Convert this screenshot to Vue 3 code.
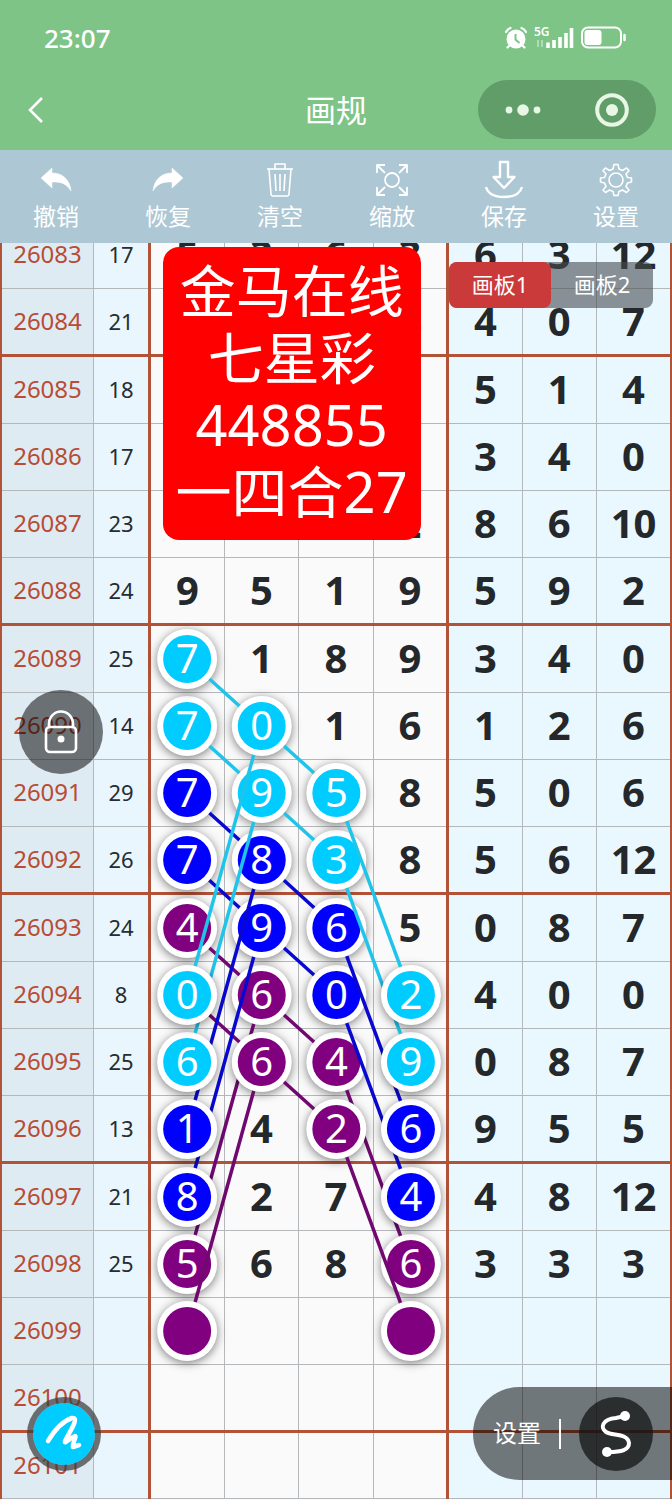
<template>
  <div class="pagina">
    <header class="cabecera">
      <div class="barra-estado">
        <span class="hora">23:07</span>
        <div class="estado-iconos">
          <svg width="24" height="24" viewBox="0 0 24 24" aria-hidden="true">
            <circle cx="12" cy="13" r="9.500" fill="#fff" />
            <path d="M2 6 Q3.500 3 6.500 2 M22 6 Q20.500 3 17.500 2 M5 20 L3.500 21.500 M19 20 L20.500 21.500" fill="none" stroke="#fff" stroke-width="2.200" stroke-linecap="round" />
            <path d="M11.500 8 V13.500 L15.500 17" fill="none" stroke="#7dc486" stroke-width="2" />
          </svg>
          <svg class="senal" width="40" height="24" viewBox="0 0 40 24" aria-hidden="true">
            <text x="0" y="10" class="red-movil">5G</text>
            <path d="M4 14 V21 M8 14 V21" stroke="#b9e5bd" stroke-width="1.500" />
            <path d="M14 16.500 V22 M20 14 V22 M26 11 V22 M32 7 V22 M37.500 2 V22" stroke="#fff" stroke-width="3.600" />
          </svg>
          <svg width="48" height="24" viewBox="0 0 48 24" aria-hidden="true">
            <rect x="2" y="1.500" width="39" height="20" rx="6" fill="none" stroke="#fff" stroke-width="2" />
            <rect x="4.500" y="4" width="17" height="15" rx="3" fill="#fff" />
            <path d="M44.500 9 V14" stroke="#fff" stroke-width="2.500" stroke-linecap="round" />
          </svg>
        </div>
      </div>
      <div class="barra-nav">
        <button type="button" class="btn-volver" aria-label="返回">
          <svg width="20" height="30" viewBox="0 0 20 30"><path d="M16 3 L4 15 L16 27" fill="none" stroke="#fff" stroke-width="2.600" /></svg>
        </button>
        <h1>画规</h1>
        <div class="capsula">
          <button type="button" aria-label="更多">
            <svg width="40" height="20" viewBox="0 0 40 20" fill="#e8f6e6">
              <circle cx="6" cy="10" r="3.400" /><circle cx="20" cy="10" r="5.800" /><circle cx="34" cy="10" r="3.400" />
            </svg>
          </button>
          <button type="button" aria-label="关闭">
            <svg width="36" height="36" viewBox="0 0 36 36">
              <circle cx="18" cy="18" r="14.800" fill="none" stroke="#e8f6e6" stroke-width="4" /><circle cx="18" cy="18" r="6" fill="#e8f6e6" />
            </svg>
          </button>
        </div>
      </div>
    </header>

    <nav class="herramientas">
      <button v-for="h in herramientas" :key="h.nombre" type="button">
        <svg width="40" height="40" viewBox="0 0 40 40" fill="none" stroke="#fff" :stroke-width="h.grosor">
          <path v-for="(d, i) in h.trazos" :key="i" :d="d" :fill="h.relleno ? '#fff' : 'none'" stroke-linejoin="round" />
        </svg>
        <span>{{ h.nombre }}</span>
      </button>
    </nav>

    <main ref="tablero" class="tablero">
      <div class="lienzo">
        <table>
          <colgroup>
            <col class="col-periodo">
            <col class="col-suma">
            <col v-for="n in 7" :key="n">
          </colgroup>
          <tbody>
            <tr v-for="(fila, i) in filas" :key="fila[0]" :class="{ gruesa: i % 4 === 1, alta: esAlta(i) }">
              <th scope="row">{{ fila[0] }}</th>
              <td class="suma">{{ fila[1] }}</td>
              <td v-for="n in 4" :key="n" class="cifra">{{ fila[2][n - 1] }}</td>
              <td v-for="n in 3" :key="'d' + n" class="cifra derecha">{{ fila[3][n - 1] }}</td>
            </tr>
          </tbody>
        </table>

        <svg class="trazado" width="100%" height="100%">
          <g v-for="(c, i) in cadenas" :key="i">
            <template v-for="(p, j) in c.puntos" :key="j">
              <g v-if="!p.oculto">
                <circle class="aro" :cx="px(p)" :cy="py(p)" r="30" />
                <circle :cx="px(p)" :cy="py(p)" r="24" :fill="c.color" />
                <text :x="px(p)" :y="py(p) + 14" class="numero">{{ p.n }}</text>
              </g>
            </template>
            <line v-for="(l, j) in lineas(c.puntos)" :key="'l' + j" v-bind="l" :stroke="c.linea" stroke-width="3.500" />
          </g>
        </svg>
      </div>

      <div class="aviso">
        <div>金马在线</div>
        <div>七星彩</div>
        <div>448855</div>
        <div>一四合27</div>
      </div>

      <div class="pestanas">
        <button type="button" :class="{ activa: panel === 1 }" @click="panel = 1">画板1</button>
        <button type="button" :class="{ activa: panel === 2 }" @click="panel = 2">画板2</button>
      </div>

      <button type="button" class="btn-bloqueo" aria-label="锁定">
        <svg width="36" height="46" viewBox="0 0 36 46" fill="none" stroke="#fff" stroke-width="2.600">
          <rect x="3" y="18" width="30" height="25" rx="4" />
          <path d="M6 18 V15 A12 12.500 0 0 1 30 15 V18" />
          <circle cx="18" cy="30" r="3.500" fill="#fff" stroke="none" />
        </svg>
      </button>
    </main>

    <button type="button" class="btn-pincel" aria-label="画笔">
      <svg width="40" height="40" viewBox="0 0 40 40">
        <path d="M4 27 C10 17 19 7 28 4 C36 3 26 17 21 27 C20 31 26 24 31 22 C33 22 28 30 29 33 L35 31" fill="none" stroke="#fff" stroke-width="4.500" stroke-linecap="round" stroke-linejoin="round" />
      </svg>
    </button>

    <div class="ajustes">
      <button type="button" class="btn-ajustes">设置</button>
      <span class="separador"></span>
      <button type="button" class="btn-curva" aria-label="曲线">
        <svg width="36" height="48" viewBox="0 0 36 48">
          <path d="M27 6 L18 8 C4 9 2 18 8 22 C14 26 30 23 31 33 C31 40 24 42 10 42" fill="none" stroke="#fff" stroke-width="4" />
          <circle cx="27" cy="6" r="5" fill="#fff" /><circle cx="9" cy="42" r="5" fill="#fff" />
        </svg>
      </button>
    </div>
  </div>
</template>

<script setup>
import { ref, onMounted, onBeforeUnmount } from 'vue';

const panel = ref(1);
const tablero = ref(null);
const ancho = ref(672);

const herramientas = [
  {
    nombre: '撤销', relleno: true, grosor: 0.5,
    trazos: ['M5 18 L16 8 V13 C27 13 34 20 35 31 C30 23 25 22 16 22 V28 Z']
  },
  {
    nombre: '恢复', relleno: true, grosor: 0.5,
    trazos: ['M35 18 L24 8 V13 C13 13 6 20 5 31 C10 23 15 22 24 22 V28 Z']
  },
  {
    nombre: '清空', grosor: 1.6,
    trazos: ['M7 9 H33', 'M15 9 V4 H25 V9', 'M9 9 L11 34 Q11.200 36 13 36 H27 Q28.800 36 29 34 L31 9', 'M15 14 L16 31 M20 14 V31 M25 14 L24 31']
  },
  {
    nombre: '缩放', grosor: 1.8,
    trazos: ['M13 20 A7 7 0 1 0 27 20 A7 7 0 1 0 13 20', 'M5 13 V5 H13 M5 5 L13 13', 'M27 5 H35 V13 M35 5 L27 13', 'M5 27 V35 H13 M5 35 L13 27', 'M27 35 H35 V27 M35 35 L27 27']
  },
  {
    nombre: '保存', grosor: 2.4,
    trazos: ['M16 2 H24 V17 H30.500 L20 28 L9.500 17 H16 Z', 'M2 27 C4 34 11 37 20 37 C29 37 36 34 38 27']
  },
  {
    nombre: '设置', grosor: 1.6,
    trazos: [
      'M13 20 A7 7 0 1 0 27 20 A7 7 0 1 0 13 20',
      'M18 4.500 H22 L23 9 L26.500 10.500 L30.500 8 L33 10.500 L30 14 L31.500 17.500 L35.500 18 V22 L31.500 23 L30 26.500 L33 30 L30.500 32.500 L26.500 30 L23 31.500 L22 35.500 H18 L17 31.500 L13.500 30 L9.500 32.500 L7 30 L10 26.500 L8.500 23 L4.500 22 V18 L8.500 17.500 L10 14 L7 10.500 L9.500 8 L13.500 10.500 L17 9 Z'
    ]
  }
];

const filas = [
  ['26083', 17, [5, 3, 6, 3], [6, 3, 12]],
  ['26084', 21, ['', '', '', 4], [4, 0, 7]],
  ['26085', 18, ['', '', '', 0], [5, 1, 4]],
  ['26086', 17, ['', '', '', 0], [3, 4, 0]],
  ['26087', 23, ['', '', '', 2], [8, 6, 10]],
  ['26088', 24, [9, 5, 1, 9], [5, 9, 2]],
  ['26089', 25, ['', 1, 8, 9], [3, 4, 0]],
  ['26090', 14, ['', '', 1, 6], [1, 2, 6]],
  ['26091', 29, ['', '', '', 8], [5, 0, 6]],
  ['26092', 26, ['', '', '', 8], [5, 6, 12]],
  ['26093', 24, ['', '', '', 5], [0, 8, 7]],
  ['26094', 8, [], [4, 0, 0]],
  ['26095', 25, [], [0, 8, 7]],
  ['26096', 13, ['', 4], [9, 5, 5]],
  ['26097', 21, ['', 2, 7], [4, 8, 12]],
  ['26098', 25, ['', 6, 8], [3, 3, 3]],
  ['26099', '', [], []],
  ['26100', '', [], []],
  ['26101', '', [], []]
];

// inicio, centro izquierdo, centro derecho, final izquierdo, final derecho
const crearCadena = (color, linea, fila, numeros, filaFinal, oculto = false) => ({
  color,
  linea,
  puntos: [
    { f: fila, c: 0, n: numeros[0], oculto },
    { f: fila + 1, c: 1, n: numeros[1] },
    { f: fila + 2, c: 2, n: numeros[2] },
    { f: filaFinal, c: 0, n: numeros[3] },
    { f: filaFinal, c: 3, n: numeros[4] }
  ]
});

// las últimas se dibujan encima de las primeras
const cadenas = [
  crearCadena('#800080', '#700870', 10, [4, 6, 4, 5, 6], 15),
  crearCadena('#800080', '#700870', 11, ['', 6, 2, '', ''], 16, true),
  crearCadena('#0000ff', '#0808d0', 9, [7, 9, 0, 8, 4], 14),
  crearCadena('#0000ff', '#0808d0', 8, [7, 8, 6, 1, 6], 13),
  crearCadena('#00ccff', '#20c4ea', 7, [7, 9, 3, 6, 9], 12),
  crearCadena('#00ccff', '#20c4ea', 6, [7, 0, 5, 0, 2], 11)
];

const esAlta = (i) => i > 0 && i < 18 && i % 4 === 2;

const px = (p) => ancho.value * (0.223 + 0.777 / 7 * (p.c + 0.5));
const py = (p) => {
  let y = 0;
  for (let i = 0; i < p.f; i++) y += esAlta(i) ? 68 : 67;
  return y + (esAlta(p.f) ? 35 : 34);
};

const tramo = (a, b) => {
  const dx = px(b) - px(a);
  const dy = py(b) - py(a);
  const k = 30 / Math.hypot(dx, dy);
  return { x1: px(a) + dx * k, y1: py(a) + dy * k, x2: px(b) - dx * k, y2: py(b) - dy * k };
};
const lineas = (p) => [tramo(p[0], p[1]), tramo(p[1], p[2]), tramo(p[1], p[3]), tramo(p[2], p[4])];

const medir = () => {
  ancho.value = tablero.value.clientWidth;
};
onMounted(() => {
  medir();
  window.addEventListener('resize', medir);
});
onBeforeUnmount(() => window.removeEventListener('resize', medir));
</script>

<style>
body {
  margin: 0;
  background: #fafafa;
}
</style>

<style scoped>
.pagina {
  position: relative;
  min-height: 100vh;
  overflow: hidden;
  font-family: "Noto Sans", "Noto Sans CJK SC", sans-serif;
}

button {
  display: flex;
  align-items: center;
  justify-content: center;
  padding: 0;
  border: none;
  background: none;
  color: #fff;
  font-family: inherit;
  cursor: pointer;
}

.cabecera {
  background: #7dc486;
  color: #fff;
}
.barra-estado {
  display: flex;
  align-items: center;
  justify-content: space-between;
  height: 80px;
  padding: 0 44px 4px;
  box-sizing: border-box;
}
.hora {
  font-size: 26px;
  font-weight: 500;
}
.estado-iconos {
  display: flex;
  align-items: center;
  gap: 6px;
}
.senal {
  overflow: visible;
}
.red-movil {
  font-size: 12px;
  font-weight: 600;
  fill: #fff;
}
.barra-nav {
  display: grid;
  grid-template-columns: 1fr auto 1fr;
  align-items: start;
  height: 70px;
  padding: 0 16px;
}
.barra-nav h1 {
  margin: 0;
  font-size: 31px;
  line-height: 60px;
  font-weight: 400;
}
.btn-volver {
  width: 40px;
  height: 60px;
}
.capsula {
  display: flex;
  justify-self: end;
  width: 178px;
  height: 59px;
  border-radius: 30px;
  background: #609d68;
}
.capsula button {
  flex: 1;
}

.herramientas {
  display: grid;
  grid-template-columns: repeat(6, 1fr);
  height: 93px;
  background: #adc8d4;
}
.herramientas button {
  flex-direction: column;
  justify-content: flex-start;
  padding-top: 10px;
  font-size: 23px;
  line-height: 32px;
}

.tablero {
  position: relative;
  overflow: hidden;
}
.lienzo {
  position: relative;
  margin-top: -22px;
}
table {
  width: 100%;
  table-layout: fixed;
  border-collapse: collapse;
  border-left: 2px solid #b25236;
  border-right: 2px solid #b25236;
}
.col-periodo {
  width: 13.8%;
}
.col-suma {
  width: 8.4%;
}
tr {
  height: 67px;
}
tr.alta {
  height: 68px;
}
th,
td {
  padding: 0 0 2px;
  border: 1px solid #b4b8ba;
  text-align: center;
  line-height: 48px;
}
th:first-child {
  border-left: 2px solid #b25236;
}
td:last-child {
  border-right: 2px solid #b25236;
}
th {
  background: #dfebf2;
  color: #b84c34;
  font-size: 24px;
  font-weight: 400;
}
td.suma {
  background: #e9f6fe;
  border-right: 3px solid #b25236;
  color: #262c30;
  font-size: 22px;
}
td.cifra {
  background: #fafafa;
  color: #24282a;
  font-size: 40px;
  font-weight: 700;
}
td.derecha {
  background: #e9f8ff;
}
td.cifra:nth-child(6) {
  border-right: 3px solid #b25236;
}
tr.gruesa th,
tr.gruesa td {
  border-bottom: 3px solid #b25236;
}

.trazado {
  position: absolute;
  top: 0;
  left: 0;
}
.aro {
  fill: #fff;
  filter: drop-shadow(0 2px 5px rgba(0, 0, 0, 0.5));
}
.numero {
  fill: #fff;
  font-size: 40px;
  text-anchor: middle;
}

.aviso {
  position: absolute;
  top: 4px;
  left: 24.2%;
  padding: 10px 13px 15px;
  border-radius: 16px;
  background: #ff0000;
  color: #fff;
  font-size: 56px;
  line-height: 67px;
  text-align: center;
}

.pestanas {
  position: absolute;
  top: 19px;
  right: 19px;
  display: flex;
  border-radius: 8px;
  background: rgba(70, 75, 80, 0.6);
}
.pestanas button {
  width: 102px;
  height: 46px;
  padding-bottom: 4px;
  border-radius: 8px;
  font-size: 22px;
}
.pestanas .activa {
  background: #cb3a3a;
}

.btn-bloqueo {
  position: absolute;
  top: 447px;
  left: 19px;
  width: 84px;
  height: 84px;
  border-radius: 50%;
  background: rgba(0, 0, 0, 0.52);
}

.btn-pincel {
  position: absolute;
  bottom: 29px;
  left: 27px;
  width: 74px;
  height: 74px;
  border: 6px solid rgba(60, 60, 60, 0.72);
  border-radius: 50%;
  background: #00ccff;
  background-clip: padding-box;
}

.ajustes {
  position: absolute;
  right: 0;
  bottom: 20px;
  display: flex;
  align-items: center;
  gap: 18px;
  height: 93px;
  padding: 0 19px 0 20px;
  border-radius: 47px 0 0 47px;
  background: rgba(0, 0, 0, 0.52);
}
.btn-ajustes {
  padding-bottom: 4px;
  font-size: 24px;
}
.separador {
  width: 2px;
  height: 30px;
  background: #fff;
}
.btn-curva {
  width: 74px;
  height: 74px;
  border-radius: 50%;
  background: rgba(20, 22, 22, 0.75);
}
</style>
